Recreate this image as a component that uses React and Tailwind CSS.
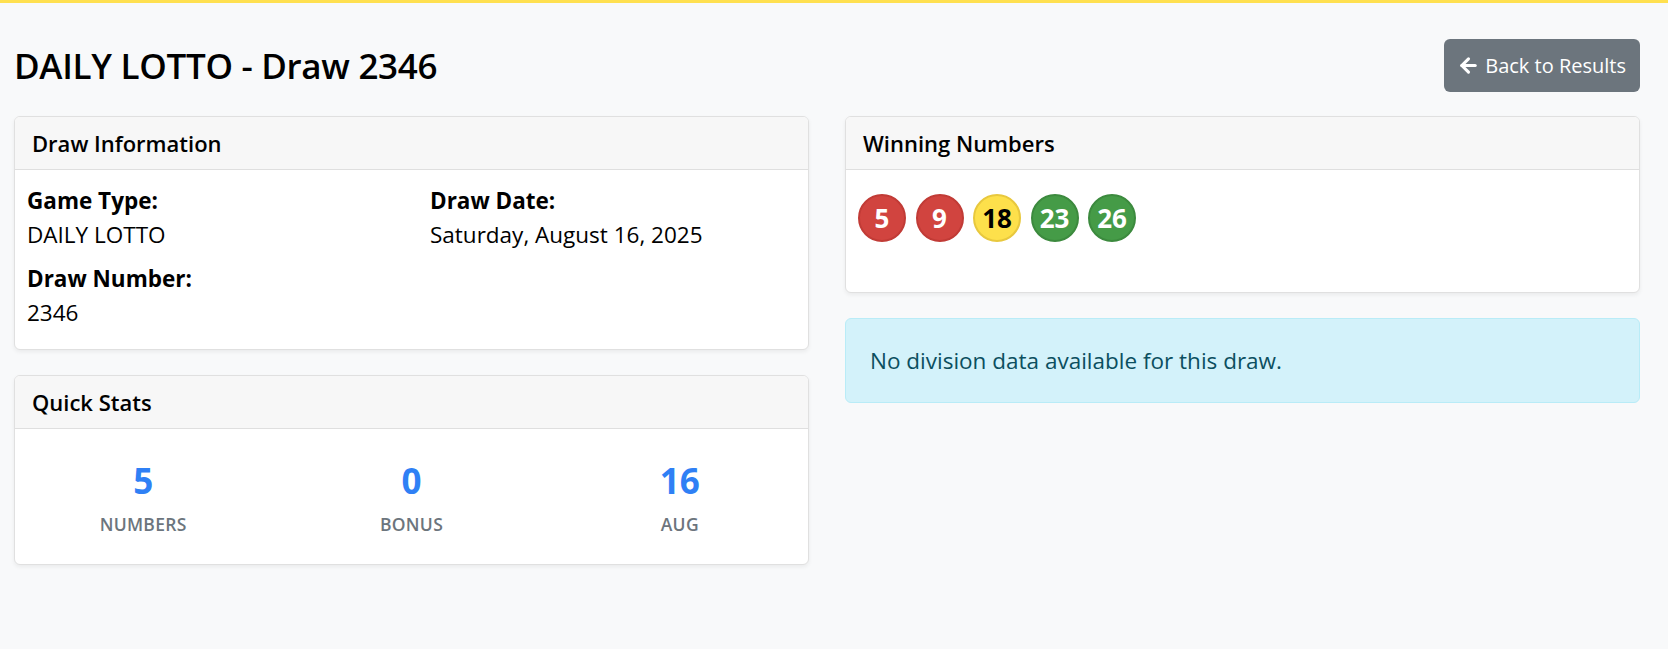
import { ArrowLeft } from 'lucide-react';

const balls = [
  { n: 5, color: 'red' },
  { n: 9, color: 'red' },
  { n: 18, color: 'yellow' },
  { n: 23, color: 'green' },
  { n: 26, color: 'green' },
];

const ballStyles = {
  red: 'bg-[#d1443f] border-[#c13b36] text-white',
  yellow: 'bg-[#fde04b] border-[#e8c83e] text-black',
  green: 'bg-[#459b47] border-[#3c8a3e] text-white',
};

const stats = [
  { value: '5', label: 'NUMBERS' },
  { value: '0', label: 'BONUS' },
  { value: '16', label: 'AUG' },
];

const Card = ({ title, children, className = '' }) => (
  <div className={`bg-white border border-[#e0e0e0] rounded-[6px] shadow-[0_2px_4px_rgba(0,0,0,0.06)] overflow-hidden ${className}`}>
    <div className="bg-[#f7f7f7] border-b border-[#dfdfdf] px-[17px] h-[53px] flex items-center">
      <h5 className="text-[22px] font-semibold leading-none text-black">{title}</h5>
    </div>
    {children}
  </div>
);

const App = () => {
  return (
    <div
      className="min-h-[649px] bg-[#f8f9fa] text-black"
      style={{ fontFamily: '"Open Sans", "Noto Sans", sans-serif' }}
    >
      <div className="h-[3px] bg-[#ffe04f]" />

      <div className="pl-[14px] pr-[28px] pt-[36px]">
        <div className="flex items-center justify-between h-[53px] mb-[24px]">
          <h2 className="text-[35px] font-semibold leading-none tracking-[-0.3px]">DAILY LOTTO - Draw 2346</h2>
          <button className="flex items-center gap-[5px] h-[53px] pl-[13px] pr-[14px] rounded-[6px] bg-[#6c757d] text-white text-[20px]">
            <ArrowLeft size={23} strokeWidth={3.2} />
            Back to Results
          </button>
        </div>

        <div className="grid grid-cols-2 gap-[36px] items-start">
          {/* left column */}
          <div className="flex flex-col gap-[25px]">
            <Card title="Draw Information">
              <div className="grid grid-cols-[403px_1fr] pl-[12px] pt-[14px] pb-[19px] text-[22.5px] leading-[34px]">
                <div>
                  <p className="font-bold">Game Type:</p>
                  <p className="mb-[10px]">DAILY LOTTO</p>
                  <p className="font-bold">Draw Number:</p>
                  <p>2346</p>
                </div>
                <div>
                  <p className="font-bold">Draw Date:</p>
                  <p>Saturday, August 16, 2025</p>
                </div>
              </div>
            </Card>

            <Card title="Quick Stats">
              <div className="grid grid-cols-3 mx-[-6px] pt-[28px] pb-[28px]">
                {stats.map((s) => (
                  <div key={s.label} className="flex flex-col items-center">
                    <span className="text-[35px] font-bold leading-[48px] text-[#2f80f5]">{s.value}</span>
                    <span className="text-[17.5px] font-semibold leading-[24px] mt-[7px] text-[#6c757d] tracking-[0.3px]">{s.label}</span>
                  </div>
                ))}
              </div>
            </Card>
          </div>

          {/* right column */}
          <div className="flex flex-col gap-[25px]">
            <Card title="Winning Numbers">
              <div className="flex gap-[9.5px] pl-[12px] pt-[24px] pb-[50px]">
                {balls.map((b) => (
                  <div
                    key={b.n}
                    className={`w-[48px] h-[48px] rounded-full border-2 flex items-center justify-center text-[26px] font-bold ${ballStyles[b.color]}`}
                  >
                    {b.n}
                  </div>
                ))}
              </div>
            </Card>

            <div className="h-[85px] flex items-center px-[24px] rounded-[6px] border border-[#b9ecf7] bg-[#d3f2fa] text-[#0b4f5f] text-[22.5px]">
              No division data available for this draw.
            </div>
          </div>
        </div>
      </div>
    </div>
  );
};

export default App;
